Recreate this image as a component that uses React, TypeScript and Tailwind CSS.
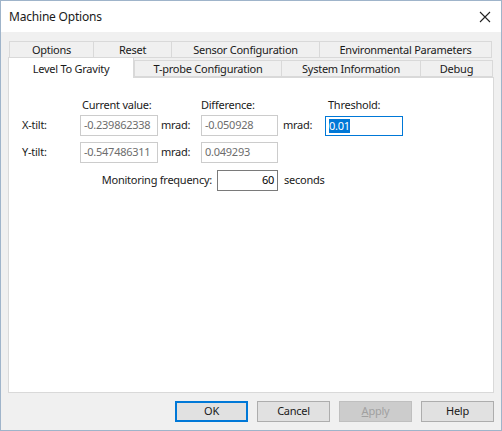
const font = { fontFamily: '"Noto Sans", "Open Sans", sans-serif' };

function Tab({ label, w, active }: { label: string; w: string; active?: boolean }) {
  return (
    <div
      className={
        active
          ? `${w} -ml-px -mt-[2px] h-[21px] -mb-px z-10 relative bg-white border border-b-0 border-[#d9d9d9] flex items-center justify-center`
          : `${w} h-[17px] -mr-px border border-[#d9d9d9] bg-[#f0f0f0] flex items-center justify-center`
      }
    >
      <span className="leading-none">{label}</span>
    </div>
  );
}

function Field({
  value,
  align = 'left',
  disabled,
  w = 'w-[78px]',
}: {
  value: string;
  align?: 'left' | 'right';
  disabled?: boolean;
  w?: string;
}) {
  return (
    <div
      className={`${w} h-[21px] border ${
        disabled ? 'border-[#cccccc] text-[#6d6d6d]' : 'border-[#7a7a7a] text-black'
      } bg-white flex items-center px-[3px] ${align === 'right' ? 'justify-end' : 'justify-start'}`}
    >
      {value}
    </div>
  );
}

function Button({
  children,
  primary,
  disabled,
}: {
  children: React.ReactNode;
  primary?: boolean;
  disabled?: boolean;
}) {
  return (
    <button
      type="button"
      className={`w-[73px] h-[21px] flex items-center justify-center ${
        primary
          ? 'border-2 border-[#0078d7] bg-[#e1e1e1]'
          : disabled
          ? 'border border-[#bfbfbf] bg-[#cccccc] text-[#a0a0a0]'
          : 'border border-[#adadad] bg-[#e1e1e1]'
      }`}
    >
      {children}
    </button>
  );
}

export default function App() {
  return (
    <div
      className="w-[502px] h-[431px] border border-[#9fb4ca] bg-[#f0f0f0] flex flex-col text-[11px] tracking-[-0.25px] text-[#1a1a1a] overflow-hidden"
      style={font}
    >
      {/* Title bar */}
      <div className="h-[31px] shrink-0 bg-white flex items-center justify-between pl-[8px] pr-[9px]">
        <span className="text-[12px] tracking-[-0.2px]">Machine Options</span>
        <svg width="12" height="12" viewBox="0 0 12 12" className="mr-[1px]">
          <path d="M1 1 L11 11 M11 1 L1 11" stroke="#222" strokeWidth="1.1" />
        </svg>
      </div>

      {/* Tabs */}
      <div className="pt-[9px] pl-[8px] flex flex-col">
        <div className="flex">
          <Tab label="Options" w="w-[85px]" />
          <Tab label="Reset" w="w-[79px]" />
          <Tab label="Sensor Configuration" w="w-[149px]" />
          <Tab label="Environmental Parameters" w="w-[173px]" />
        </div>
        <div className="flex -mt-px items-end h-[20px]">
          <Tab label="Level To Gravity" w="w-[126px]" active />
          <Tab label="T-probe Configuration" w="w-[148px]" />
          <Tab label="System Information" w="w-[140px]" />
          <Tab label="Debug" w="w-[73px]" />
        </div>
      </div>

      {/* Panel */}
      <div className="mx-[7px] w-[486px] h-[316px] bg-white border border-[#d9d9d9] pt-[19px] pl-[13px]">
        <div className="grid grid-cols-[58px_78px_43px_77px_47px_78px] gap-y-[6px] items-center">
          <div />
          <div className="pl-[2px] h-[16px] -mb-[4px]">Current value:</div>
          <div />
          <div className="h-[16px] -mb-[4px]">Difference:</div>
          <div />
          <div className="pl-[3px] h-[16px] -mb-[4px]">Threshold:</div>

          <div>X-tilt:</div>
          <Field value="-0.239862338" disabled />
          <div className="pl-[3px]">mrad:</div>
          <Field value="-0.050928" disabled w="w-[77px]" />
          <div className="pl-[5px]">mrad:</div>
          <div className="w-[78px] h-[20px] border border-[#0078d7] bg-white flex items-center px-[3px]">
            <span className="bg-[#0078d7] text-white leading-[14px]">0.01</span>
          </div>

          <div>Y-tilt:</div>
          <Field value="-0.547486311" disabled />
          <div className="pl-[3px]">mrad:</div>
          <Field value="0.049293" disabled w="w-[77px]" />
          <div />
          <div />
        </div>

        <div className="flex items-center mt-[7px]">
          <div className="w-[195px] text-right pr-[5px]">Monitoring frequency:</div>
          <Field value="60" align="right" w="w-[61px]" />
          <div className="pl-[6px]">seconds</div>
        </div>
      </div>

      {/* Buttons */}
      <div className="flex justify-end gap-[9px] pr-[7px] pt-[8px]">
        <Button primary>OK</Button>
        <Button>Cancel</Button>
        <Button disabled>
          <span>
            <span className="underline">A</span>pply
          </span>
        </Button>
        <Button>Help</Button>
      </div>
    </div>
  );
}
